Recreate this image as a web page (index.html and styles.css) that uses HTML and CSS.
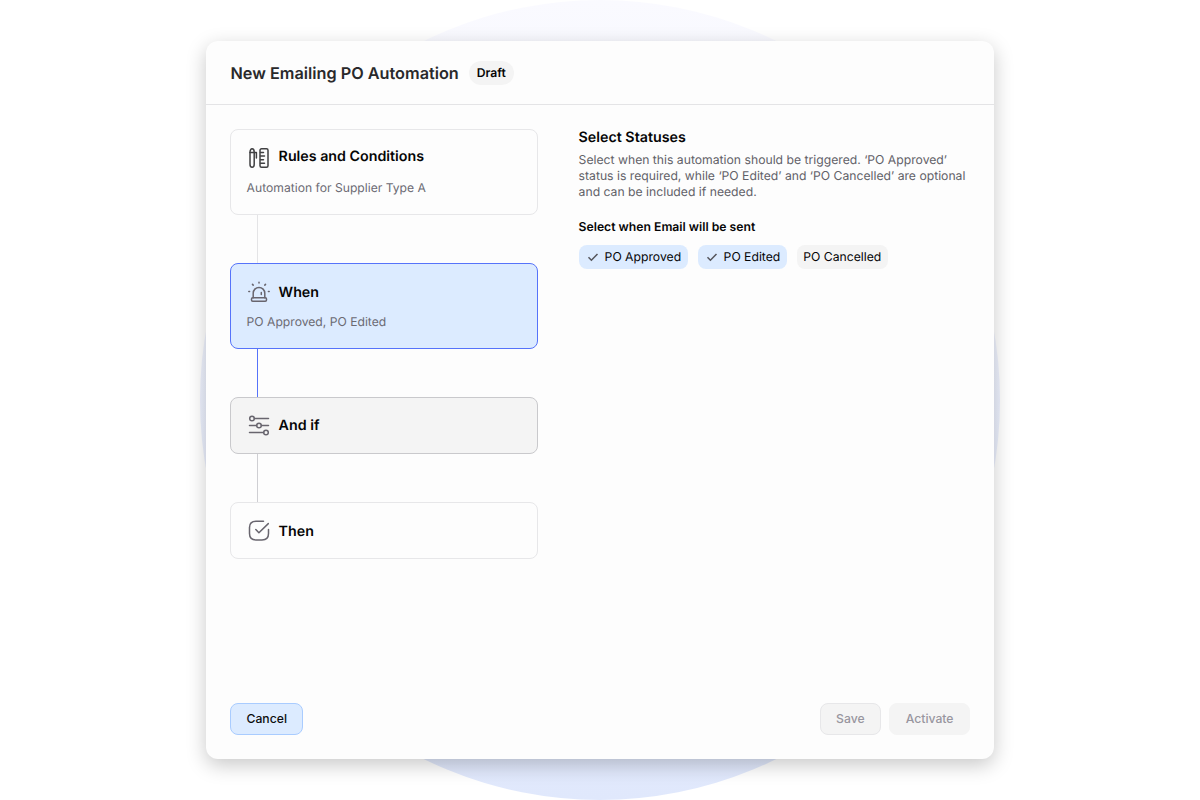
FILE: index.html
```html
<!DOCTYPE html>
<html lang="en">
<head>
  <meta charset="UTF-8">
  <meta name="viewport" content="width=device-width, initial-scale=1.0">
  <title>New Emailing PO Automation</title>
  <link rel="stylesheet" href="styles.css">
</head>
<body>
<div class="backdrop"></div>

<div class="modal">
  <header class="modal-header">
    <h1>New Emailing PO Automation</h1>
    <span class="badge">Draft</span>
  </header>

  <main class="modal-body">
    <!-- Steps -->
    <div class="steps">
      <div class="step step-rules">
        <div class="step-title">
          <svg class="icon icon-dark" viewBox="0 0 24 24">
            <path d="M3 6.2C3 4.3 3.8 2.8 5.1 2.8S7.2 4.3 7.2 6.2V18.2C7.2 20 6.4 21.2 5.1 21.2S3 20 3 18.2Z"/>
            <path d="M3 6.6H9.4V12"/>
            <rect x="13" y="2.8" width="8" height="18.4" rx="1.5"/>
            <path d="M13.5 6.5H16.5M13.5 10.1H17.5M13.5 13.7H16.5M13.5 17.3H17.5"/>
          </svg>
          <h2>Rules and Conditions</h2>
        </div>
        <p>Automation for Supplier Type A</p>
      </div>
      <div class="connector"></div>
      <div class="step step-active">
        <div class="step-title">
          <svg class="icon" viewBox="0 0 24 24">
            <path d="M6.2 17.7V13.2a5.8 5.8 0 0 1 11.6 0v4.5"/>
            <rect x="4.5" y="17.7" width="15" height="3.6" rx="1.2"/>
            <path d="M14.3 12.5v2.1M12 2.3v.7M5.5 4.4l.7.7M18.5 4.4l-.7.7M1.8 11.6h.8M21.4 11.6h.8"/>
          </svg>
          <h2>When</h2>
        </div>
        <p>PO Approved, PO Edited</p>
      </div>
      <div class="connector connector-active"></div>
      <div class="step step-muted">
        <div class="step-title">
          <svg class="icon" viewBox="0 0.5 24 24">
            <path d="M7.4 5H21.5M2.5 12H9.6M14.4 12H21.5M2.5 19H16.6"/>
            <circle cx="5" cy="5" r="2.3"/>
            <circle cx="12" cy="12" r="2.3"/>
            <circle cx="19" cy="19" r="2.3"/>
          </svg>
          <h2>And if</h2>
        </div>
      </div>
      <div class="connector connector-muted"></div>
      <div class="step">
        <div class="step-title">
          <svg class="icon" viewBox="0 0.4 24 24">
            <path d="M16.5 2.7H9C4.3 2.7 2.5 4.5 2.5 9V15C2.5 19.6 4.3 21.4 9 21.4H15C19.7 21.4 21.5 19.6 21.5 15V11"/>
            <path d="M8.8 11l3.1 3.2L21.3 5"/>
          </svg>
          <h2>Then</h2>
        </div>
      </div>
    </div>

    <!-- Settings of the selected step -->
    <section class="details">
      <h2>Select Statuses</h2>
      <p>Select when this automation should be triggered. ‘PO Approved’<br>
        status is required, while ‘PO Edited’ and ‘PO Cancelled’ are optional<br>
        and can be included if needed.</p>
      <h3>Select when Email will be sent</h3>
      <div class="chips">
        <span class="chip chip-on">
          <svg class="check" viewBox="0 0 12 12"><path d="M1.5 6.3L4.4 9.2L10.5 3"/></svg>PO Approved
        </span>
        <span class="chip chip-on">
          <svg class="check" viewBox="0 0 12 12"><path d="M1.5 6.3L4.4 9.2L10.5 3"/></svg>PO Edited
        </span>
        <span class="chip">PO Cancelled</span>
      </div>
    </section>
  </main>

  <footer class="modal-footer">
    <button class="btn btn-cancel">Cancel</button>
    <button class="btn btn-save" disabled>Save</button>
    <button class="btn" disabled>Activate</button>
  </footer>
</div>
</body>
</html>
```
FILE: styles.css
```css
* {
  box-sizing: border-box;
}
body {
  margin: 0;
  height: 100vh;
  display: flex;
  align-items: center;
  justify-content: center;
  background: #fff;
  color: #050506;
  font-family: Inter, "Liberation Sans", sans-serif;
  text-rendering: geometricPrecision;
  overflow: hidden;
}
h1, h2, h3, p {
  margin: 0;
}
.backdrop {
  position: absolute;
  width: 800px;
  height: 800px;
  border-radius: 50%;
  background: linear-gradient(#fafaff, #e0e8fc);
}
.modal {
  position: relative;
  display: flex;
  flex-direction: column;
  width: 788px;
  height: 718px;
  border-radius: 12px;
  background: #fdfdfd;
  box-shadow: 0 6px 20px rgba(0, 0, 0, 0.22);
}
.modal-header {
  display: flex;
  align-items: center;
  gap: 10px;
  height: 64px;
  padding: 0 24.5px;
  border-bottom: 1px solid #e4e4e6;
}
.modal-header h1 {
  font-size: 16.25px;
  font-weight: 600;
  line-height: 24px;
  color: #29292b;
}
.badge {
  height: 24px;
  padding: 0 8px;
  border-radius: 12px;
  background: #f4f4f4;
  font-size: 12.2px;
  font-weight: 600;
  line-height: 24px;
}
.modal-body {
  flex: 1;
  display: flex;
  gap: 40.6px;
  padding: 24px 24px 0;
}
.steps {
  width: 308px;
}
.step {
  padding: 16px 15.6px 15px;
  border: 1px solid #e7e7e9;
  border-radius: 8px;
}
.step-title {
  display: flex;
  align-items: center;
  gap: 8px;
  height: 24px;
}
.step h2 {
  font-size: 14.25px;
  font-weight: 600;
  line-height: 20px;
}
.step-active h2, .step:last-child h2 {
  margin-top: 1px;
}
.step-rules h2 {
  margin-top: -3px;
}
.step p {
  margin-top: 8px;
  padding-bottom: 2px;
  font-size: 12.15px;
  line-height: 19px;
  color: #6b6a73;
}
.step-active {
  border-color: #5673fa;
  background: #dcebff;
}
.step-muted {
  border-color: #c9c9cc;
  background: #f4f4f4;
}
.icon {
  width: 24px;
  height: 24px;
  fill: none;
  stroke: #68656e;
  stroke-width: 1.5;
  stroke-linecap: round;
  stroke-linejoin: round;
}
.icon-dark {
  stroke: #414143;
}
.connector {
  width: 1px;
  height: 48px;
  margin-left: 27px;
  background: #e4e4e6;
}
.connector-active {
  background: #5673fa;
}
.connector-muted {
  background: #cfcfd3;
}
.details h2 {
  padding-top: 1px;
  font-size: 14.25px;
  font-weight: 600;
  line-height: 16px;
}
.details p {
  margin-top: 6px;
  font-size: 12.2px;
  line-height: 16px;
  white-space: nowrap;
  color: #626168;
}
.details h3 {
  margin-top: 19px;
  font-size: 12.2px;
  font-weight: 600;
  line-height: 16px;
}
.chips {
  display: flex;
  gap: 10px;
  margin-top: 10px;
}
.chip {
  display: flex;
  align-items: center;
  gap: 6px;
  height: 24px;
  padding: 0 6.5px 1px;
  border-radius: 8px;
  background: #f4f4f4;
  font-size: 12.2px;
}
.chip-on {
  padding-left: 8px;
  background: #dcebff;
}
.check {
  width: 12px;
  height: 12px;
  fill: none;
  stroke: #55555c;
  stroke-width: 1.5;
}
.modal-footer {
  display: flex;
  gap: 8px;
  padding: 0 24px 24px;
}
.btn {
  height: 32px;
  padding: 0 15.5px 2px;
  border: 1px solid #f4f4f4;
  border-radius: 8px;
  background: #f4f4f4;
  color: #98969f;
  font-family: inherit;
  font-size: 12.2px;
  font-weight: 500;
}
.btn-cancel {
  margin-right: auto;
  border-color: #a9ccff;
  background: #dcebff;
  color: #0c0c0d;
}
.btn-save {
  border-color: #e7e7e9;
}
```
